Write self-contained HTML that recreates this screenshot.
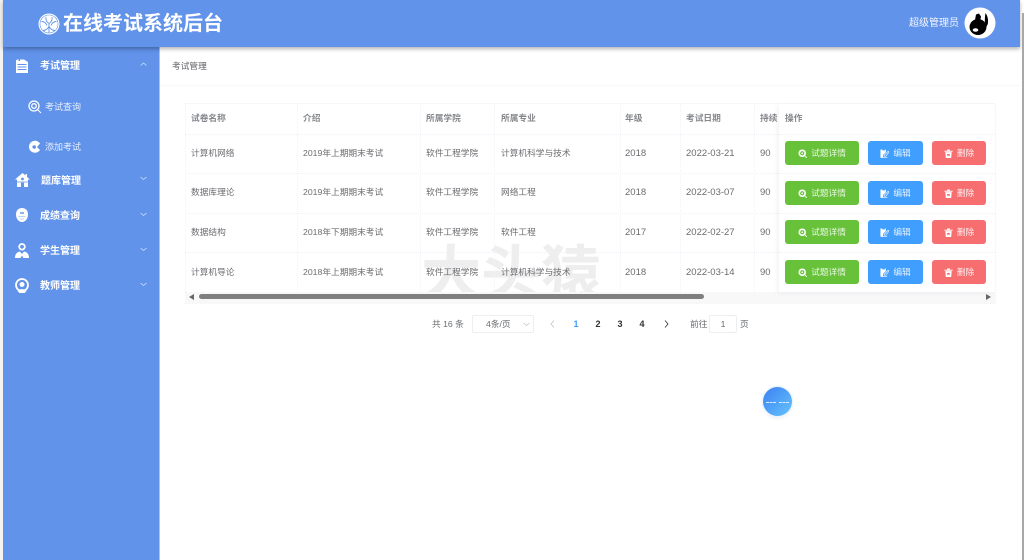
<!DOCTYPE html>
<html lang="zh"><head><meta charset="utf-8"><title>在线考试系统后台</title>
<style>
*{box-sizing:border-box;margin:0;padding:0}
html,body{width:1024px;height:560px;overflow:hidden;background:#fff}
body{font-family:"Liberation Sans","Noto Sans CJK SC",sans-serif;position:relative;color:#606266}
.a{position:absolute;white-space:nowrap}
#wrap{position:absolute;left:0;top:0;width:1024px;height:560px;filter:blur(.3px)}
#hd{left:3px;top:0;width:1017px;height:47px;background:#6193ea;box-shadow:0 2px 4px rgba(0,0,0,.3);z-index:3}
#sb{left:3px;top:47px;width:156px;height:513px;background:#6193ea;z-index:2}
.m{color:#fff;font-size:10px;font-weight:bold;line-height:14px;z-index:4}
.s{color:#e8effc;font-size:9px;line-height:14px;z-index:4}
.t{font-size:8.7px;line-height:12px;color:#6a6c70;z-index:1}
.d{font-size:9.5px;transform:translateY(1px)}
.h{font-weight:bold;color:#85878c}
.vl{width:0;border-left:1px dotted #f2f3f6;top:104px;height:188px}
.hl{height:0;border-top:1px dotted #f0f1f4;left:185px;width:810px}
.b{height:24px;border-radius:3px;color:rgba(255,255,255,.86);font-size:8.7px;line-height:24px;z-index:6;display:flex;align-items:center;justify-content:center;gap:4px}
.g{left:785px;width:74px;background:#67c23a}
.bl{left:868px;width:55px;background:#409eff}
.r{left:932px;width:54px;background:#f76e71}
.b svg{width:9px;height:9px;flex:none}
.ar{z-index:4}
.p{font-size:9px;line-height:12px;font-weight:bold;color:#303133;top:318px}
</style></head><body><div id="wrap">
<div class="a" id="hd"></div><div class="a" id="sb"></div>
<div class="a" style="left:0;top:0;width:3px;height:560px;background:#f3f3f3"></div>
<div class="a" style="left:159px;top:47px;width:1px;height:513px;background:#a9c4f3;z-index:2"></div>
<div class="a" style="left:1022px;top:13px;width:2px;height:547px;background:#a8a8a8;z-index:4"></div>

<svg class="a" style="left:38px;top:13px;z-index:4" width="22" height="22" viewBox="0 0 22 22"><circle cx="11" cy="11" r="10.500" fill="#fff"/><circle cx="11" cy="11" r="9" fill="none" stroke="#6193ea" stroke-width=".6"/><path d="M11 11v9M11 13.500C9.500 16 7.500 17.500 5 17.500M11 13.500c1.500 2.500 3.500 4 6 4M8 4c-.5 3 .5 5 3 6.500 2.500-1.500 3.500-3.500 3-6.500M3.500 8.500c2.500 0 4.500 1.500 5.500 4M18.500 8.500c-2.500 0-4.500 1.500-5.500 4" stroke="#6193ea" stroke-width=".9" fill="none"/></svg>
<div class="a" style="left:63px;top:12px;font-size:20px;line-height:24px;font-weight:bold;color:#fff;z-index:4">在线考试系统后台</div>
<div class="a" style="left:909px;top:16.500px;font-size:10px;line-height:14px;color:#f3f6fd;z-index:4">超级管理员</div>
<svg class="a" style="left:964px;top:7px;z-index:4" width="32" height="32" viewBox="0 0 32 32"><circle cx="16" cy="16" r="15.500" fill="#fff"/><ellipse cx="14" cy="20" rx="8.500" ry="8" fill="#000"/><path d="M11 13l1-5.500 3-1 2 3-1 5z" fill="#000"/><path d="M21.500 6c2.300 3 3 7.500 2.300 11l-1.500 3-1.300-.5c-.3-4-.3-9.500.5-13.500z" fill="#000"/><ellipse cx="11.500" cy="23" rx="2.800" ry="1.800" fill="#fff"/></svg>

<!-- sidebar -->
<svg class="a ar" style="left:16px;top:59px" width="12" height="14" viewBox="0 0 12 14"><path d="M0 1.500L1 .500h1.500V2H4V.500h4L12 3v11H0z" fill="#fff"/><path d="M1.500 5.500h9M1.500 8h9M1.500 10.500h9" stroke="#6193ea" stroke-width=".9"/></svg>
<div class="a m" style="left:40px;top:60px">考试管理</div>
<svg class="a ar" style="left:140px;top:62px" width="7" height="5"><path d="M.5 3.500L3.500 1l3 2.500" stroke="#cfe0fa" fill="none" stroke-width=".8"/></svg>
<svg class="a ar" style="left:28px;top:100px" width="14" height="14" viewBox="0 0 14 14"><circle cx="6" cy="6" r="5" fill="none" stroke="#fff" stroke-width="1.300"/><circle cx="6" cy="6" r="2.300" fill="none" stroke="#fff" stroke-width="1.300"/><path d="M10 10l3 3" stroke="#fff"/></svg>
<div class="a s" style="left:45px;top:100px">考试查询</div>
<svg class="a ar" style="left:28px;top:140px" width="13" height="14" viewBox="0 0 13 14"><path d="M12 3.500A6 6 0 1 0 12 10L9 7z" fill="#fff"/><circle cx="6.200" cy="7" r="1.800" fill="#6193ea"/></svg>
<div class="a s" style="left:45px;top:140px">添加考试</div>
<svg class="a ar" style="left:15px;top:173px" width="15" height="14" viewBox="0 0 15 14"><path d="M7.500 0l3 2.500V1H12v3l3 2.500h-2V14H2V6.500H0z" fill="#fff"/><circle cx="7.500" cy="6" r="1.400" fill="#6193ea"/><path d="M2 9h11M6.300 10h2.400v4H6.300z" stroke="#6193ea" stroke-width=".7" fill="#6193ea"/></svg>
<div class="a m" style="left:41px;top:174.500px">题库管理</div>
<svg class="a ar" style="left:16px;top:208px" width="12" height="14" viewBox="0 0 12 14"><path d="M6 0c3.500 0 6 2.500 6 6.500S9.500 14 6 14 0 10.500 0 6.500 2.500 0 6 0z" fill="#fff"/><path d="M4 5h4" stroke="#6193ea" stroke-width="1.400"/><path d="M2.500 8.500h7M4 11h4" stroke="#a9c4f3" stroke-width=".8"/></svg>
<div class="a m" style="left:40px;top:209.500px">成绩查询</div>
<svg class="a ar" style="left:15px;top:243px" width="14" height="15" viewBox="0 0 14 15"><circle cx="7" cy="3.800" r="2.800" fill="none" stroke="#fff" stroke-width="1.800"/><path d="M0 15c0-4 2-6 5-6.500L7 11l2-2.500c3 .5 5 2.500 5 6.500H8.500L7 12.500 5.500 15z" fill="#fff"/></svg>
<div class="a m" style="left:40px;top:244.500px">学生管理</div>
<svg class="a ar" style="left:15px;top:278px" width="14" height="15" viewBox="0 0 14 15"><circle cx="7" cy="7" r="6" fill="none" stroke="#fff" stroke-width="1.800"/><circle cx="7" cy="6.500" r="2.500" fill="#fff"/><path d="M2.500 13c1-2.500 8-2.500 9 0l-2 2h-5z" fill="#fff"/></svg>
<div class="a m" style="left:40px;top:279.500px">教师管理</div>
<svg class="a ar" style="left:140px;top:176px" width="7" height="5"><path d="M.5 1l3 2.500 3-2.500" stroke="#cfe0fa" fill="none" stroke-width=".8"/></svg>
<svg class="a ar" style="left:140px;top:212px" width="7" height="5"><path d="M.5 1l3 2.500 3-2.500" stroke="#cfe0fa" fill="none" stroke-width=".8"/></svg>
<svg class="a ar" style="left:140px;top:247px" width="7" height="5"><path d="M.5 1l3 2.500 3-2.500" stroke="#cfe0fa" fill="none" stroke-width=".8"/></svg>
<svg class="a ar" style="left:140px;top:282px" width="7" height="5"><path d="M.5 1l3 2.500 3-2.500" stroke="#cfe0fa" fill="none" stroke-width=".8"/></svg>

<!-- breadcrumb -->
<div class="a t" style="left:172px;top:60px;color:#606266">考试管理</div>
<div class="a" style="left:160px;top:85px;width:861px;height:0;border-top:1px dotted #f0f1f4"></div>

<!-- watermark -->
<div class="a" style="left:421px;top:243px;font-size:60px;line-height:64px;font-weight:bold;color:#eeeeee;z-index:0">大头猿</div>

<!-- table -->
<div class="a hl" style="top:103px"></div><div class="a hl" style="top:134px"></div><div class="a hl" style="top:173px"></div><div class="a hl" style="top:213px"></div><div class="a hl" style="top:252px"></div><div class="a hl" style="top:292px"></div><div class="a hl" style="top:303px"></div>
<div class="a vl" style="left:185px;height:200px"></div><div class="a vl" style="left:297px"></div><div class="a vl" style="left:420px"></div><div class="a vl" style="left:494px"></div><div class="a vl" style="left:620px"></div><div class="a vl" style="left:680px"></div><div class="a vl" style="left:754px"></div><div class="a vl" style="left:995px;height:200px"></div>

<div class="a t h" style="left:191px;top:112px">试卷名称</div><div class="a t h" style="left:303px;top:112px">介绍</div><div class="a t h" style="left:426px;top:112px">所属学院</div><div class="a t h" style="left:501px;top:112px">所属专业</div><div class="a t h" style="left:625px;top:112px">年级</div><div class="a t h" style="left:686px;top:112px">考试日期</div><div class="a t h" style="left:760px;top:112px">持续</div>

<div class="a t" style="left:191px;top:147px">计算机网络</div><div class="a t" style="left:303px;top:147px">2019年上期期末考试</div><div class="a t" style="left:426px;top:147px">软件工程学院</div><div class="a t" style="left:501px;top:147px">计算机科学与技术</div><div class="a t d" style="left:625px;top:147px">2018</div><div class="a t d" style="left:686px;top:147px">2022-03-21</div><div class="a t d" style="left:760px;top:147px">90</div>
<div class="a t" style="left:191px;top:186px">数据库理论</div><div class="a t" style="left:303px;top:186px">2019年上期期末考试</div><div class="a t" style="left:426px;top:186px">软件工程学院</div><div class="a t" style="left:501px;top:186px">网络工程</div><div class="a t d" style="left:625px;top:186px">2018</div><div class="a t d" style="left:686px;top:186px">2022-03-07</div><div class="a t d" style="left:760px;top:186px">90</div>
<div class="a t" style="left:191px;top:226px">数据结构</div><div class="a t" style="left:303px;top:226px">2018年下期期末考试</div><div class="a t" style="left:426px;top:226px">软件工程学院</div><div class="a t" style="left:501px;top:226px">软件工程</div><div class="a t d" style="left:625px;top:226px">2017</div><div class="a t d" style="left:686px;top:226px">2022-02-27</div><div class="a t d" style="left:760px;top:226px">90</div>
<div class="a t" style="left:191px;top:266px">计算机导论</div><div class="a t" style="left:303px;top:266px">2018年上期期末考试</div><div class="a t" style="left:426px;top:266px">软件工程学院</div><div class="a t" style="left:501px;top:266px">计算机科学与技术</div><div class="a t d" style="left:625px;top:266px">2018</div><div class="a t d" style="left:686px;top:266px">2022-03-14</div><div class="a t d" style="left:760px;top:266px">90</div>

<!-- fixed column -->
<div class="a" style="left:779px;top:104px;width:216px;height:188px;background:#fff;box-shadow:-2px 1px 5px rgba(0,0,0,.05);z-index:5"></div>
<div class="a t h" style="left:785px;top:112px;z-index:6">操作</div>
<div class="a" style="left:779px;top:134px;width:216px;border-top:1px dotted #f0f1f4;z-index:6"></div>
<div class="a" style="left:779px;top:173px;width:216px;border-top:1px dotted #f0f1f4;z-index:6"></div>
<div class="a" style="left:779px;top:213px;width:216px;border-top:1px dotted #f0f1f4;z-index:6"></div>
<div class="a" style="left:779px;top:252px;width:216px;border-top:1px dotted #f0f1f4;z-index:6"></div>

<div class="a b g" style="top:141px"><svg viewBox="0 0 10 10"><circle cx="4.700" cy="4.700" r="3.300" fill="none" stroke="#fff" stroke-width="1.800"/><circle cx="4.700" cy="4.700" r="1" fill="#fff"/><path d="M7.500 7.500L10 10" stroke="#fff"/></svg>试题详情</div>
<div class="a b bl" style="top:141px"><svg viewBox="0 0 10 10"><path d="M.5.500h2v1h3v-1h1v3l-3 3v3h-3z" fill="#fff"/><path d="M9 2.500L5 6.500V8h1.500L10 3.500zM1 9.500h7" stroke="#fff" stroke-width=".7" fill="none"/></svg>编辑</div>
<div class="a b r" style="top:141px"><svg viewBox="0 0 10 10"><path d="M.5 2h9v1h-9zM3.500.500h3V2h-3zM1.500 3.500h7L8 10H2z" fill="#fff"/><path d="M3.500 5.500h3v2h-3z" fill="#f76e71"/></svg>删除</div>
<div class="a b g" style="top:181px"><svg viewBox="0 0 10 10"><circle cx="4.700" cy="4.700" r="3.300" fill="none" stroke="#fff" stroke-width="1.800"/><circle cx="4.700" cy="4.700" r="1" fill="#fff"/><path d="M7.500 7.500L10 10" stroke="#fff"/></svg>试题详情</div>
<div class="a b bl" style="top:181px"><svg viewBox="0 0 10 10"><path d="M.5.500h2v1h3v-1h1v3l-3 3v3h-3z" fill="#fff"/><path d="M9 2.500L5 6.500V8h1.500L10 3.500zM1 9.500h7" stroke="#fff" stroke-width=".7" fill="none"/></svg>编辑</div>
<div class="a b r" style="top:181px"><svg viewBox="0 0 10 10"><path d="M.5 2h9v1h-9zM3.500.500h3V2h-3zM1.500 3.500h7L8 10H2z" fill="#fff"/><path d="M3.500 5.500h3v2h-3z" fill="#f76e71"/></svg>删除</div>
<div class="a b g" style="top:220px"><svg viewBox="0 0 10 10"><circle cx="4.700" cy="4.700" r="3.300" fill="none" stroke="#fff" stroke-width="1.800"/><circle cx="4.700" cy="4.700" r="1" fill="#fff"/><path d="M7.500 7.500L10 10" stroke="#fff"/></svg>试题详情</div>
<div class="a b bl" style="top:220px"><svg viewBox="0 0 10 10"><path d="M.5.500h2v1h3v-1h1v3l-3 3v3h-3z" fill="#fff"/><path d="M9 2.500L5 6.500V8h1.500L10 3.500zM1 9.500h7" stroke="#fff" stroke-width=".7" fill="none"/></svg>编辑</div>
<div class="a b r" style="top:220px"><svg viewBox="0 0 10 10"><path d="M.5 2h9v1h-9zM3.500.500h3V2h-3zM1.500 3.500h7L8 10H2z" fill="#fff"/><path d="M3.500 5.500h3v2h-3z" fill="#f76e71"/></svg>删除</div>
<div class="a b g" style="top:260px"><svg viewBox="0 0 10 10"><circle cx="4.700" cy="4.700" r="3.300" fill="none" stroke="#fff" stroke-width="1.800"/><circle cx="4.700" cy="4.700" r="1" fill="#fff"/><path d="M7.500 7.500L10 10" stroke="#fff"/></svg>试题详情</div>
<div class="a b bl" style="top:260px"><svg viewBox="0 0 10 10"><path d="M.5.500h2v1h3v-1h1v3l-3 3v3h-3z" fill="#fff"/><path d="M9 2.500L5 6.500V8h1.500L10 3.500zM1 9.500h7" stroke="#fff" stroke-width=".7" fill="none"/></svg>编辑</div>
<div class="a b r" style="top:260px"><svg viewBox="0 0 10 10"><path d="M.5 2h9v1h-9zM3.500.500h3V2h-3zM1.500 3.500h7L8 10H2z" fill="#fff"/><path d="M3.500 5.500h3v2h-3z" fill="#f76e71"/></svg>删除</div>

<!-- scrollbar -->
<div class="a" style="left:186px;top:292px;width:809px;height:11px;background:#f8f8f9;z-index:1"></div>
<div class="a" style="left:199px;top:294px;width:505px;height:5px;border-radius:3px;background:#7f7f7f;z-index:2"></div>
<svg class="a" style="left:189px;top:294px;z-index:2" width="5" height="6"><path d="M5 0v6L0 3z" fill="#666"/></svg>
<svg class="a" style="left:986px;top:294px;z-index:2" width="5" height="6"><path d="M0 0v6l5-3z" fill="#666"/></svg>

<!-- pagination -->
<div class="a t" style="left:432px;top:318px;font-size:8.7px">共 16 条</div>
<div class="a" style="left:472px;top:315px;width:62px;height:18px;border:1px solid #eceef2;border-radius:2px"></div>
<div class="a t" style="left:486px;top:318px">4条/页</div>
<svg class="a" style="left:523px;top:322px" width="7" height="5"><path d="M.5 1l3 2.500 3-2.500" stroke="#c0c4cc" fill="none" stroke-width=".8"/></svg>
<svg class="a" style="left:550px;top:320px" width="5" height="8"><path d="M4 .5L1 4l3 3.500" stroke="#c0c4cc" fill="none" stroke-width=".8"/></svg>
<div class="a p" style="left:573.500px;color:#409eff">1</div><div class="a p" style="left:595.500px">2</div><div class="a p" style="left:617.500px">3</div><div class="a p" style="left:639.500px">4</div>
<svg class="a" style="left:663.500px;top:320px" width="5" height="8"><path d="M1 .5L4 4 1 7.500" stroke="#303133" fill="none" stroke-width=".8"/></svg>
<div class="a t" style="left:690px;top:318px">前往</div>
<div class="a t" style="left:709px;top:315px;width:28px;height:18px;border:1px solid #eceef2;border-radius:2px;text-align:center;line-height:16px">1</div>
<div class="a t" style="left:740px;top:318px">页</div>

<!-- floating ball -->
<div class="a" style="left:763px;top:387px;width:29px;height:29px;border-radius:50%;background:linear-gradient(135deg,#3a80f2,#62bdfc 90%);box-shadow:0 0 0 1.500px #eef5fd,0 2px 4px rgba(0,0,0,.08);z-index:6"></div>
<div class="a" style="left:766px;top:402px;width:10px;border-top:1px dashed #dbeafe;z-index:7"></div>
<div class="a" style="left:779px;top:402px;width:10px;border-top:1px dashed #dbeafe;z-index:7"></div>
</div></body></html>
